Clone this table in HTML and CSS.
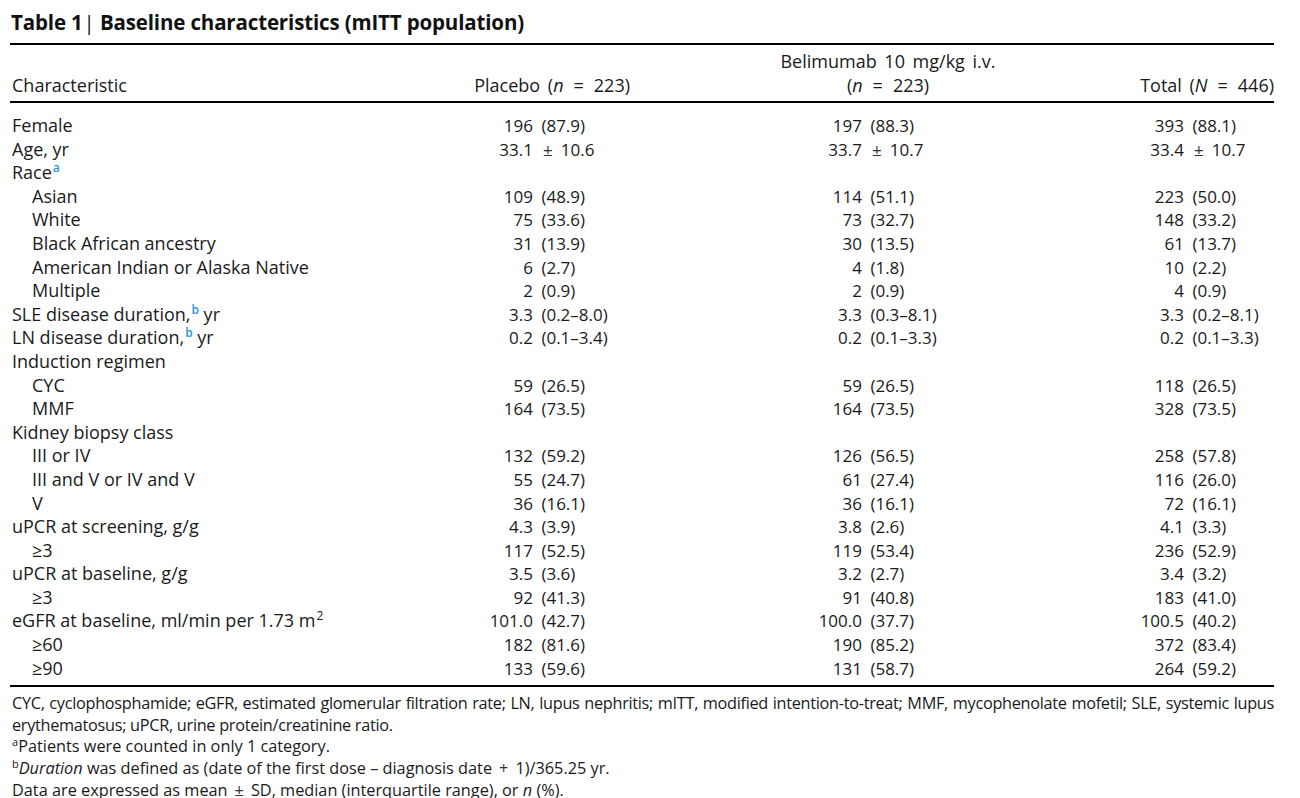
FILE: index.html
```html
<!DOCTYPE html>
<html lang="en">
<head>
<meta charset="utf-8">
<title>Table 1 | Baseline characteristics</title>
<link rel="stylesheet" href="styles.css">
</head>
<body>
<div class="page">
  <h1 class="title">Table 1<span class="bar">|</span> Baseline characteristics (mITT population)</h1>
  <table class="tbl">
    <colgroup>
      <col class="w1"><col class="w2"><col class="w3"><col class="w4">
    </colgroup>
    <thead>
      <tr>
        <th class="h-char">Characteristic</th>
        <th class="h-pla">Placebo (<i>n</i><span class="op">=</span>223)</th>
        <th class="h-bel">Belimumab 10 mg/kg i.v.<br>(<i>n</i><span class="op">=</span>223)</th>
        <th class="h-tot">Total (<i>N</i><span class="op">=</span>446)</th>
      </tr>
    </thead>
    <tbody>
      <tr class="first"><td class="lab">Female</td><td class="v p"><span class="a">196</span> (87.9)</td><td class="v b"><span class="a">197</span> (88.3)</td><td class="v t"><span class="a">393</span> (88.1)</td></tr>
      <tr><td class="lab">Age, yr</td><td class="v p"><span class="a">33.1</span><span class="pm">±</span>10.6</td><td class="v b"><span class="a">33.7</span><span class="pm">±</span>10.7</td><td class="v t"><span class="a">33.4</span><span class="pm">±</span>10.7</td></tr>
      <tr><td class="lab">Race<sup class="fn">a</sup></td><td></td><td></td><td></td></tr>
      <tr><td class="lab sub">Asian</td><td class="v p"><span class="a">109</span> (48.9)</td><td class="v b"><span class="a">114</span> (51.1)</td><td class="v t"><span class="a">223</span> (50.0)</td></tr>
      <tr><td class="lab sub">White</td><td class="v p"><span class="a">75</span> (33.6)</td><td class="v b"><span class="a">73</span> (32.7)</td><td class="v t"><span class="a">148</span> (33.2)</td></tr>
      <tr><td class="lab sub">Black African ancestry</td><td class="v p"><span class="a">31</span> (13.9)</td><td class="v b"><span class="a">30</span> (13.5)</td><td class="v t"><span class="a">61</span> (13.7)</td></tr>
      <tr><td class="lab sub">American Indian or Alaska Native</td><td class="v p"><span class="a">6</span> (2.7)</td><td class="v b"><span class="a">4</span> (1.8)</td><td class="v t"><span class="a">10</span> (2.2)</td></tr>
      <tr><td class="lab sub">Multiple</td><td class="v p"><span class="a">2</span> (0.9)</td><td class="v b"><span class="a">2</span> (0.9)</td><td class="v t"><span class="a">4</span> (0.9)</td></tr>
      <tr><td class="lab">SLE disease duration,<sup class="fn">b</sup> yr</td><td class="v p"><span class="a">3.3</span> (0.2–8.0)</td><td class="v b"><span class="a">3.3</span> (0.3–8.1)</td><td class="v t"><span class="a">3.3</span> (0.2–8.1)</td></tr>
      <tr><td class="lab">LN disease duration,<sup class="fn">b</sup> yr</td><td class="v p"><span class="a">0.2</span> (0.1–3.4)</td><td class="v b"><span class="a">0.2</span> (0.1–3.3)</td><td class="v t"><span class="a">0.2</span> (0.1–3.3)</td></tr>
      <tr><td class="lab">Induction regimen</td><td></td><td></td><td></td></tr>
      <tr><td class="lab sub">CYC</td><td class="v p"><span class="a">59</span> (26.5)</td><td class="v b"><span class="a">59</span> (26.5)</td><td class="v t"><span class="a">118</span> (26.5)</td></tr>
      <tr><td class="lab sub">MMF</td><td class="v p"><span class="a">164</span> (73.5)</td><td class="v b"><span class="a">164</span> (73.5)</td><td class="v t"><span class="a">328</span> (73.5)</td></tr>
      <tr><td class="lab">Kidney biopsy class</td><td></td><td></td><td></td></tr>
      <tr><td class="lab sub">III or IV</td><td class="v p"><span class="a">132</span> (59.2)</td><td class="v b"><span class="a">126</span> (56.5)</td><td class="v t"><span class="a">258</span> (57.8)</td></tr>
      <tr><td class="lab sub">III and V or IV and V</td><td class="v p"><span class="a">55</span> (24.7)</td><td class="v b"><span class="a">61</span> (27.4)</td><td class="v t"><span class="a">116</span> (26.0)</td></tr>
      <tr><td class="lab sub">V</td><td class="v p"><span class="a">36</span> (16.1)</td><td class="v b"><span class="a">36</span> (16.1)</td><td class="v t"><span class="a">72</span> (16.1)</td></tr>
      <tr><td class="lab">uPCR at screening, g/g</td><td class="v p"><span class="a">4.3</span> (3.9)</td><td class="v b"><span class="a">3.8</span> (2.6)</td><td class="v t"><span class="a">4.1</span> (3.3)</td></tr>
      <tr><td class="lab sub">≥3</td><td class="v p"><span class="a">117</span> (52.5)</td><td class="v b"><span class="a">119</span> (53.4)</td><td class="v t"><span class="a">236</span> (52.9)</td></tr>
      <tr><td class="lab">uPCR at baseline, g/g</td><td class="v p"><span class="a">3.5</span> (3.6)</td><td class="v b"><span class="a">3.2</span> (2.7)</td><td class="v t"><span class="a">3.4</span> (3.2)</td></tr>
      <tr><td class="lab sub">≥3</td><td class="v p"><span class="a">92</span> (41.3)</td><td class="v b"><span class="a">91</span> (40.8)</td><td class="v t"><span class="a">183</span> (41.0)</td></tr>
      <tr><td class="lab">eGFR at baseline, ml/min per 1.73 m<sup class="sq">2</sup></td><td class="v p"><span class="a">101.0</span> (42.7)</td><td class="v b"><span class="a">100.0</span> (37.7)</td><td class="v t"><span class="a">100.5</span> (40.2)</td></tr>
      <tr><td class="lab sub">≥60</td><td class="v p"><span class="a">182</span> (81.6)</td><td class="v b"><span class="a">190</span> (85.2)</td><td class="v t"><span class="a">372</span> (83.4)</td></tr>
      <tr class="last"><td class="lab sub">≥90</td><td class="v p"><span class="a">133</span> (59.6)</td><td class="v b"><span class="a">131</span> (58.7)</td><td class="v t"><span class="a">264</span> (59.2)</td></tr>
    </tbody>
  </table>
  <div class="notes">
    <p class="abbr">CYC, cyclophosphamide; eGFR, estimated glomerular filtration rate; LN, lupus nephritis; mITT, modified intention-to-treat; MMF, mycophenolate mofetil; SLE, systemic lupus erythematosus; uPCR, urine protein/creatinine ratio.</p>
    <p><sup>a</sup>Patients were counted in only 1 category.</p>
    <p><sup>b</sup><i>Duration</i> was defined as (date of the first dose – diagnosis date<span class="pmf">+</span>1)/365.25 yr.</p>
    <p>Data are expressed as mean<span class="pmf">±</span>SD, median (interquartile range), or <i>n</i> (%).</p>
  </div>
</div>
</body>
</html>
```

FILE: styles.css
```css
html, body {
  margin: 0;
  padding: 0;
  background: #ffffff;
}

body {
  font-family: "Open Sans", "Noto Sans", "DejaVu Sans", sans-serif;
  color: #1a1a1a;
}

.page {
  width: 1264px;
  padding: 10px 0 0 10px;
}

.title {
  margin: 0 0 9px 1px;
  font-size: 20.5px;
  line-height: 24px;
  font-weight: 700;
  letter-spacing: -0.15px;
  color: #111;
}
.title .bar {
  font-weight: 400;
  margin-left: 1px;
}

.tbl {
  width: 1264px;
  table-layout: fixed;
  border-collapse: collapse;
  border-top: 2px solid #000;
  border-bottom: 2px solid #000;
  font-size: 18px;
}

.w1 { width: 440px; }
.w2 { width: 240px; }
.w3 { width: 340px; }
.w4 { width: 244px; }

.tbl thead th {
  font-weight: 400;
  line-height: 24px;
  padding: 4px 0 4px 0;
  vertical-align: bottom;
  border-bottom: 2px solid #000;
  white-space: nowrap;
}

.op {
  margin: 0 10px;
}

.h-char { text-align: left; padding-left: 2px !important; }
.h-pla { text-align: right; padding-right: 60px !important; word-spacing: 3px; }
.h-bel { text-align: center; padding-left: 56px !important; word-spacing: 3px; }
.h-tot { text-align: right; word-spacing: 3px; }

.tbl td {
  line-height: 23.6px;
  padding: 0;
  white-space: nowrap;
}

.tbl tr.first td { padding-top: 11px; }
.tbl tr.last td { padding-bottom: 5px; }

.lab { padding-left: 2px !important; }
.lab.sub { padding-left: 22px !important; }

.v {
  font-size: 17px;
}
.v .a {
  display: inline-block;
  text-align: right;
  margin-right: 4px;
}
.v.p .a { width: 83px; }
.v.b .a { width: 172px; }
.v.t .a { width: 154px; }

.pm {
  margin: 0 8px 0 6px;
  color: #333;
}

.pmf {
  margin: 0 7px;
  color: #333;
}

sup {
  font-size: 12px;
  line-height: 0;
  vertical-align: 7px;
}
sup.fn { color: #2f98d2; margin-left: 1px; font-weight: 600; }
sup.sq { margin-left: 1px; }

.notes {
  padding-top: 6px;
  font-size: 16.3px;
  line-height: 21.6px;
}
.notes p {
  margin: 0 0 0 2px;
}
.notes p.abbr {
  text-align: justify;
  letter-spacing: -0.3px;
}
.notes sup {
  font-size: 11px;
  vertical-align: 6px;
}
```
